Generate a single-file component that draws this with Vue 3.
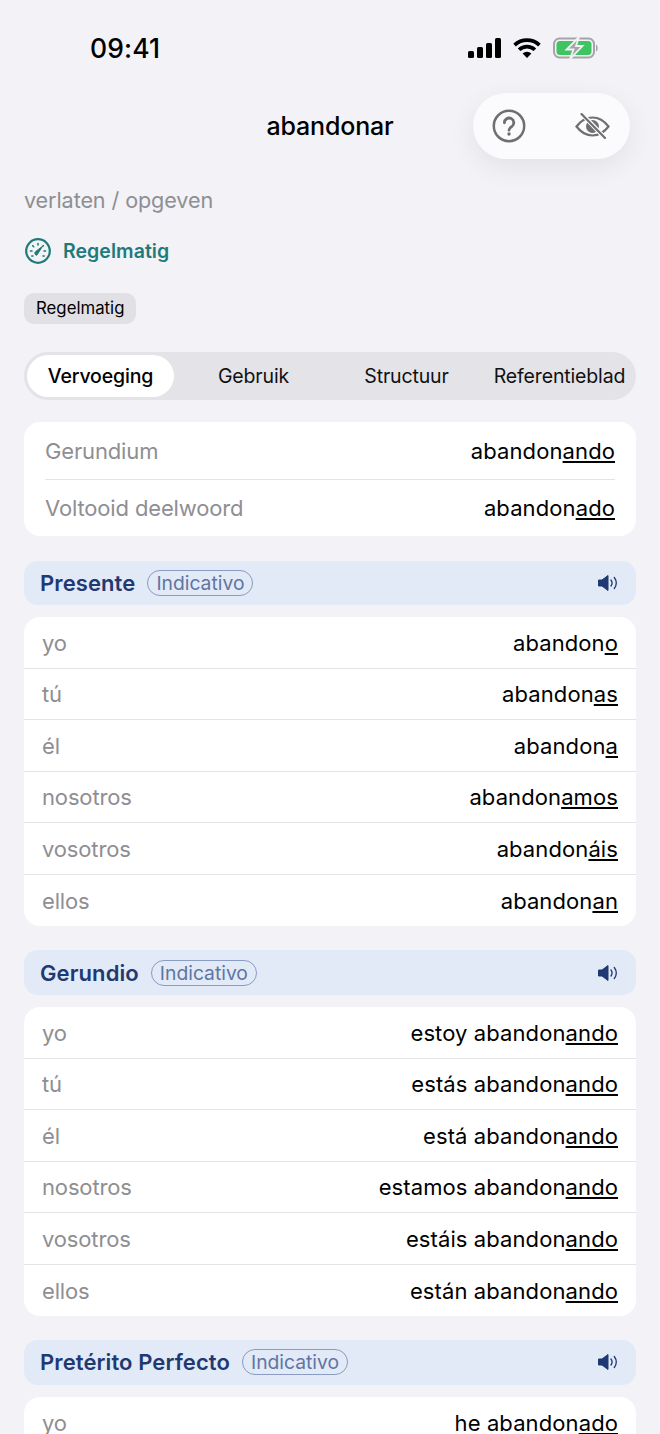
<script setup>
const tabs = ['Vervoeging', 'Gebruik', 'Structuur', 'Referentieblad']
const pronouns = ['yo', 'tú', 'él', 'nosotros', 'vosotros', 'ellos']
const sections = [
  { title: 'Presente', rows: [['abandon', 'o'], ['abandon', 'as'], ['abandon', 'a'], ['abandon', 'amos'], ['abandon', 'áis'], ['abandon', 'an']] },
  { title: 'Gerundio', rows: [['estoy abandon', 'ando'], ['estás abandon', 'ando'], ['está abandon', 'ando'], ['estamos abandon', 'ando'], ['estáis abandon', 'ando'], ['están abandon', 'ando']] },
  { title: 'Pretérito Perfecto', rows: [['he abandon', 'ado']] }
]
</script>

<template>
  <div class="page">
    <header class="status">
      <span class="time">09:41</span>
      <div class="status-icons">
        <svg width="33" height="20" viewBox="0 0 33 20"><rect x="0" y="13" width="6" height="7" rx="1.5"/><rect x="9" y="9" width="6" height="11" rx="1.5"/><rect x="18" y="5" width="6" height="15" rx="1.5"/><rect x="27" y="0" width="6" height="20" rx="1.5"/></svg>
        <svg width="28" height="20" viewBox="0 0 28 20"><path d="M14 20l-4.4-4.6a6.4 6.4 0 0 1 8.8 0z"/><path d="M7.4 13.1L4.800 10.400a13.400 13.400 0 0 1 18.400 0l-2.600 2.700a9.600 9.600 0 0 0-13.200 0z"/><path d="M2.900 8.400L0.300 5.700a19.800 19.800 0 0 1 27.400 0l-2.600 2.700a16 16 0 0 0-22.200 0z"/></svg>
        <svg width="46" height="22" viewBox="0 0 46 22"><rect x="1" y="1.500" width="40" height="19" rx="5.500" fill="none" stroke="#a5a5a8" stroke-width="2"/><rect x="3.500" y="4" width="35" height="14" rx="3.500" fill="#3fc463"/><path d="M43 7.500c2 .6 2.400 6.400 0 7z" fill="#a5a5a8"/><path d="M26 0L13.500 12.500h7L17 22l12.500-13H23z" fill="#a5a5a8" stroke="#f2f2f7" stroke-width="1.800"/></svg>
      </div>
    </header>

    <div class="nav">
      <h1>abandonar</h1>
      <div class="pill">
        <svg width="34" height="34" viewBox="0 0 34 34" fill="none" stroke="#6f6f72" stroke-width="2.500"><circle cx="17" cy="17" r="15.200"/><path d="M12.400 13.800a4.700 4.700 0 1 1 7.500 3.700c-1.800 1.300-2.900 2-2.900 3.700" stroke-width="2.800" stroke-linecap="round"/><circle cx="17" cy="25" r="1.700" fill="#6f6f72" stroke="none"/></svg>
        <svg width="36" height="26" viewBox="0 0 36 26" fill="none" stroke="#6f6f72" stroke-width="2.200"><path d="M1.500 13.500C6 7.500 11.500 4.500 17.500 4.500s11.500 3 16 9c-4.500 6-10 9-16 9s-11.500-3-16-9z"/><circle cx="17.500" cy="13.500" r="6.500" fill="#6f6f72" stroke="none"/><path d="M7.500 1.500L30 25" stroke="#fbfbfe" stroke-width="4.500"/><path d="M6.500 1l23.500 24" stroke-linecap="round"/></svg>
      </div>
    </div>

    <main class="content">
      <p class="subtitle">verlaten / opgeven</p>
      <div class="level">
        <svg width="26" height="26" viewBox="0 0 26 26" fill="none" stroke="#1f7a78"><circle cx="13" cy="13" r="11.800" stroke-width="2.200"/><path d="M13 5.500v1.500M7.700 7.700l1 1M5.500 13H7M19 13h1.500M18.300 7.700l-.6.600M6.800 18h1.200M18 18h1.200" stroke-width="1.600" stroke-linecap="round"/><path d="M10.800 17c-1.400-1.300-1-2.900 0-3.600l6.600-5-4.400 7c-.6 1-1.300 2.400-2.200 1.600z" fill="#1f7a78" stroke-width="1"/></svg>
        <span>Regelmatig</span>
      </div>
      <span class="badge">Regelmatig</span>

      <nav class="tabs">
        <span v-for="(t, i) in tabs" :key="t" class="tab" :class="{ active: i === 0 }">{{ t }}</span>
      </nav>

      <section class="card forms">
        <div class="form-row"><span class="label">Gerundium</span><span class="value">abandon<u>ando</u></span></div>
        <div class="form-row"><span class="label">Voltooid deelwoord</span><span class="value">abandon<u>ado</u></span></div>
      </section>

      <section v-for="s in sections" :key="s.title" class="tense">
        <div class="tense-head">
          <strong>{{ s.title }}</strong>
          <span class="mood">Indicativo</span>
          <svg class="speaker" width="20" height="16" viewBox="0 0 20 16" fill="none"><path d="M0.500 5h3.500L10 0.500v15L4 11H.5z" fill="#1f3a72" stroke="#1f3a72" stroke-linejoin="round"/><path d="M13 5c1.300 1.800 1.300 4.200 0 6M16.300 2.500c2.400 3.300 2.400 7.700 0 11" stroke="#1f3a72" stroke-width="1.300" stroke-linecap="round"/></svg>
        </div>
        <div class="card conj">
          <div v-for="(r, i) in s.rows" :key="i" class="conj-row">
            <span class="label">{{ pronouns[i] }}</span>
            <span class="value">{{ r[0] }}<u>{{ r[1] }}</u></span>
          </div>
        </div>
      </section>
    </main>
  </div>
</template>

<style>
html, body { margin: 0; background: #f2f2f7; }
</style>

<style scoped>
.page {
  position: relative;
  width: 660px;
  height: 1434px;
  overflow: hidden;
  background: #f2f2f7;
  font-family: Inter, "Liberation Sans", sans-serif;
  color: #000;
}
.status {
  height: 93px;
  box-sizing: border-box;
  padding: 33px 61px 0 90px;
  display: flex;
  justify-content: space-between;
  align-items: flex-start;
}
.time { font-size: 26.500px; line-height: 30px; font-weight: 550; letter-spacing: 0.1px; }
.status-icons { display: flex; align-items: center; gap: 12px; padding-top: 4px; }
.nav {
  position: relative;
  height: 66px;
  display: flex;
  align-items: center;
  justify-content: center;
}
h1 { margin: 0; font-size: 25px; font-weight: 550; letter-spacing: -0.15px; }
.pill {
  position: absolute;
  right: 30px;
  top: 0;
  width: 157px;
  height: 66px;
  box-sizing: border-box;
  padding: 0 19px;
  border-radius: 33px;
  background: #fbfbfe;
  box-shadow: 0 8px 28px rgba(0, 0, 0, 0.07);
  display: flex;
  align-items: center;
  justify-content: space-between;
}
.content { padding: 0 24px; }
.subtitle { margin: 25px 0 0; font-size: 21.600px; line-height: 32px; color: #8e8e93; letter-spacing: -0.1px; }
.level { margin: 19px 0 0 1px; height: 32px; display: flex; align-items: center; gap: 12px; font-size: 19.500px; font-weight: 600; color: #1f7a78; letter-spacing: 0.05px; }
.badge {
  display: block;
  width: fit-content;
  margin-top: 25.500px;
  padding: 0 12px;
  height: 31.500px;
  line-height: 31.500px;
  border-radius: 10px;
  background: #e0e0e5;
  font-size: 16.800px;
}
.tabs {
  margin-top: 28px;
  height: 48px;
  border-radius: 24px;
  background: #e3e3e8;
  display: grid;
  grid-template-columns: repeat(4, 153px);
  align-items: center;
  justify-items: center;
  font-size: 19.500px;
  letter-spacing: -0.15px;
}
.tab { white-space: nowrap; color: #111; }
.tab.active {
  width: 147px;
  height: 42px;
  line-height: 42px;
  text-align: center;
  border-radius: 21px;
  background: #fff;
  font-weight: 500;
  color: #000;
}
.card { background: #fff; border-radius: 16px; overflow: hidden; }
.forms { margin-top: 22px; padding: 0 21px; }
.form-row {
  height: 57px;
  box-sizing: border-box;
  display: flex;
  justify-content: space-between;
  align-items: center;
  font-size: 22px;
}
.form-row + .form-row { border-top: 1px solid #e4e4e8; }
.label { color: #8e8e93; letter-spacing: -0.15px; }
.value { color: #000; letter-spacing: 0.1px; }
u { text-underline-offset: 2px; text-decoration-thickness: 1.500px; }
.tense { margin-top: 23.900px; }
.forms + .tense { margin-top: 24.600px; }
.tense-head {
  height: 44.500px;
  box-sizing: border-box;
  padding: 0 18px 0 16px;
  display: flex;
  align-items: center;
  border-radius: 14px;
  background: #e2e9f7;
}
.tense-head strong { font-size: 22px; font-weight: 600; color: #1f3a72; letter-spacing: 0.1px; }
.mood {
  margin-left: 12px;
  height: 26px;
  line-height: 24px;
  box-sizing: border-box;
  padding: 0 8px;
  border: 1px solid #8a9cc2;
  border-radius: 13px;
  font-size: 19.300px;
  color: #5f75a2;
}
.speaker { margin-left: auto; }
.conj { margin-top: 12.400px; }
.conj-row {
  height: 51.500px;
  box-sizing: border-box;
  padding: 0 18px;
  display: flex;
  justify-content: space-between;
  align-items: center;
  font-size: 22px;
  border-bottom: 1px solid #e4e4e8;
}
.conj-row:last-child { border-bottom: 0; }
</style>
